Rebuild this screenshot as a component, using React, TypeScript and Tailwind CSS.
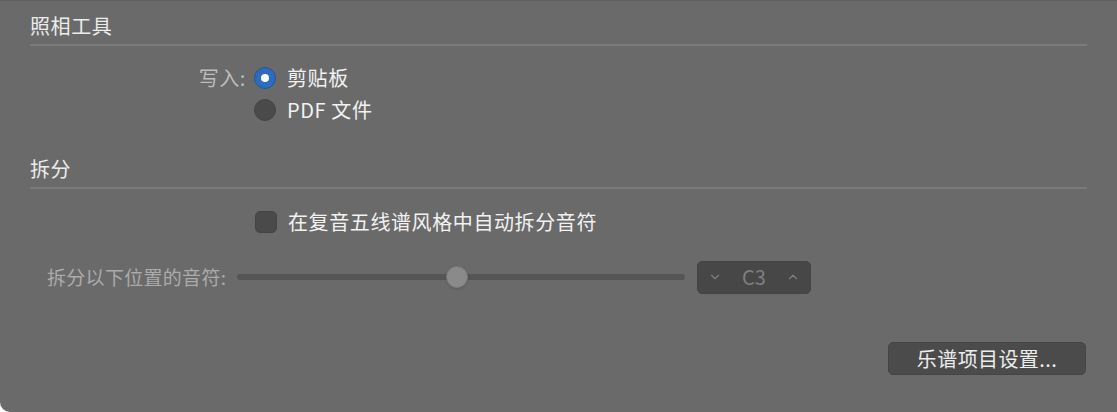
import { ChevronDown, ChevronUp } from "lucide-react";

const font = { fontFamily: '"PingFang SC", "Noto Sans CJK SC", "Noto Sans", sans-serif' };

function SectionTitle({ title }: { title: string }) {
  return (
    <div className="mx-[30px] border-b-2 border-[#7b7b7b] pb-[4px] text-[20px] tracking-[0.6px] leading-[28px] text-[#ececec]">
      {title}
    </div>
  );
}

function Radio({ checked, label }: { checked?: boolean; label: string }) {
  return (
    <div className="flex items-center h-[32px]">
      {checked ? (
        <span className="flex items-center justify-center w-[22px] h-[22px] rounded-full bg-[#2c6bbd] border border-[#24589c]">
          <span className="w-[8px] h-[8px] rounded-full bg-white" />
        </span>
      ) : (
        <span className="w-[22px] h-[22px] rounded-full bg-[#4a4a4a] border border-[#444]" />
      )}
      <span className="ml-[11px] text-[20px] tracking-[0.6px] text-[#f2f2f2]">{label}</span>
    </div>
  );
}

export default function App() {
  return (
    <div
      className="w-[1117px] h-[412px] bg-[#6a6a6a] border-t border-[#5f5f5f] rounded-bl-[10px] overflow-hidden"
      style={font}
    >
      <div className="pt-[11px]">
        <SectionTitle title="照相工具" />
      </div>

      <div className="flex mt-[16px]">
        <div className="w-[246px] text-right text-[20px] tracking-[0.6px] leading-[32px] text-[#bdbdbd]">写入:</div>
        <div className="ml-[8px] flex flex-col">
          <Radio checked label="剪贴板" />
          <Radio label="PDF 文件" />
        </div>
      </div>

      <div className="mt-[29px]">
        <SectionTitle title="拆分" />
      </div>

      <div className="flex items-center mt-[17px] ml-[255px] h-[32px]">
        <span className="w-[22px] h-[22px] rounded-[5px] bg-[#4a4a4a] border border-[#444]" />
        <span className="ml-[11px] text-[20px] tracking-[0.6px] text-[#f2f2f2]">在复音五线谱风格中自动拆分音符</span>
      </div>

      <div className="flex items-center mt-[22px] h-[34px]">
        <div className="ml-[47px] w-[180px] text-[19px] tracking-[0.3px] text-[#ababab] whitespace-nowrap">拆分以下位置的音符:</div>
        <div className="ml-[10px] relative w-[448px] h-[24px] flex items-center">
          <div className="w-full h-[6px] rounded-full bg-[#555]" />
          <div className="absolute left-[209px] top-[1px] w-[22px] h-[22px] rounded-full bg-[#8a8a8a] border border-[#7a7a7a] shadow-sm" />
        </div>
        <div className="ml-[12px] w-[114px] h-[33px] rounded-[5px] bg-[#474747] border border-[#444] flex items-center justify-between px-[10px] text-[#7e7e7e]">
          <ChevronDown size={14} strokeWidth={2} />
          <span className="text-[20px]">C3</span>
          <ChevronUp size={14} strokeWidth={2} />
        </div>
      </div>

      <div className="flex justify-end mt-[48px] mr-[31px]">
        <div className="w-[198px] h-[33px] rounded-[5px] bg-[#4b4b4b] border border-[#454545] flex items-center justify-center text-[20px] tracking-[0.4px] text-[#ececec]">
          乐谱项目设置...
        </div>
      </div>
    </div>
  );
}
